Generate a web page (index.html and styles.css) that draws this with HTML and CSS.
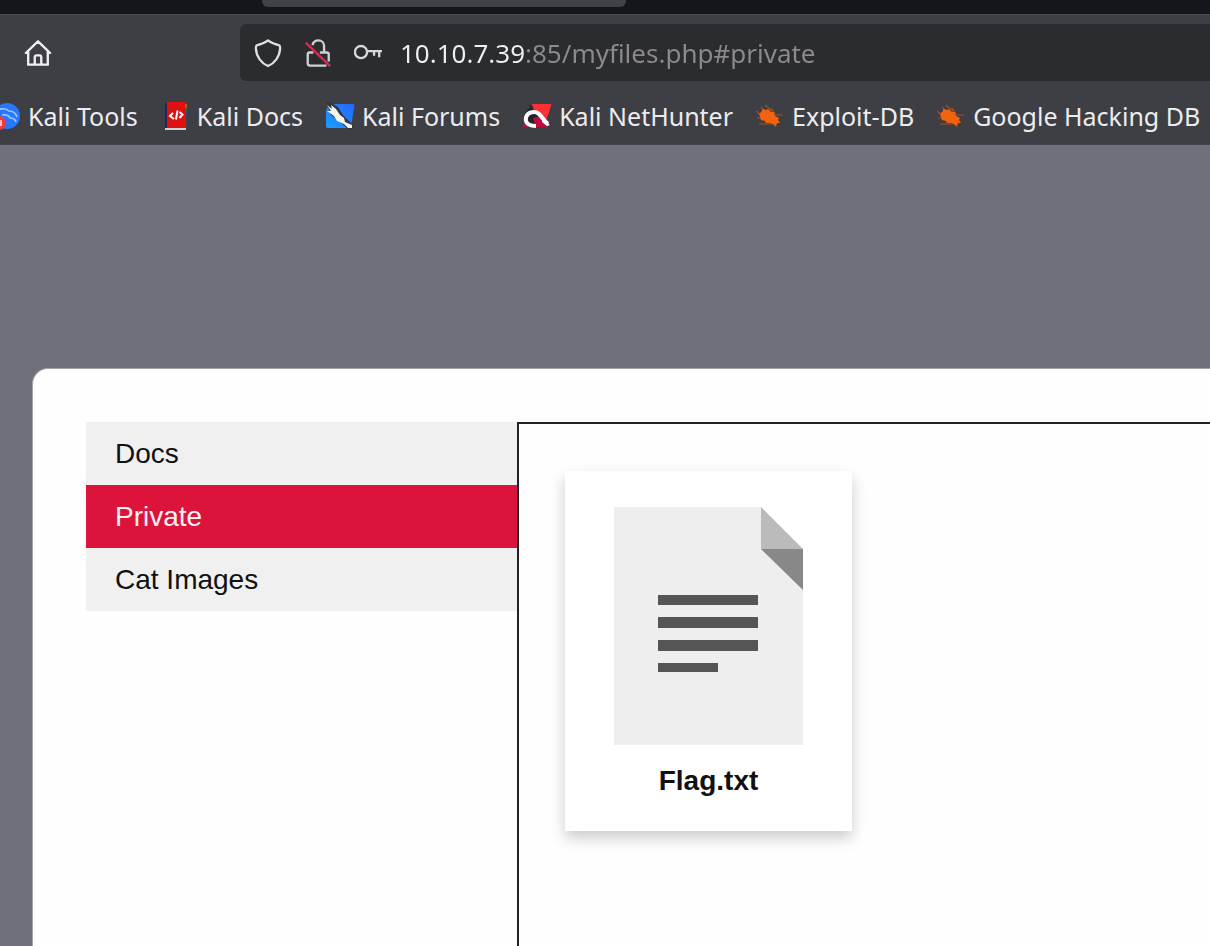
FILE: index.html
```html
<!DOCTYPE html>
<html lang="en">
<head>
<meta charset="utf-8">
<meta name="viewport" content="width=device-width, initial-scale=1">
<title>My Files</title>
<link rel="stylesheet" href="styles.css">
</head>
<body>
<header class="browser">
  <div class="tab-strip"><div class="active-tab"></div></div>
  <div class="toolbar">
    <button class="home" type="button" aria-label="Home">
      <svg class="icon" viewBox="0 0 30 30" fill="none" stroke="#f0f0f3" stroke-width="2.500" stroke-linejoin="round" stroke-linecap="round"><path d="M2 15 15 2.500 28 15M4.500 13v14.500h21V13M11.500 27v-7.500q0-2 2-2h3q2 0 2 2V27"/></svg>
    </button>
    <div class="address">
      <svg class="icon" viewBox="0 0 30 30" fill="none" stroke="#e0e0e2" stroke-width="2.400" stroke-linejoin="round"><path d="M15 1.500C12 4 7 5.700 3.500 6.500 2 6.800 2 8 2 10c.5 9 6 16 13 19C22 26 27.500 19 28 10c0-2 0-3.200-1.500-3.500C23 5.700 18 4 15 1.500z"/></svg>
      <svg class="icon" viewBox="0 0 30 30" fill="none" stroke-width="2.500"><path stroke="#d0d0d2" stroke-linejoin="round" d="M9 6.500C10 3 12.500 1.500 15.500 1.500c3.500 0 6 2.500 6 6v7M17 14.500h7.500q2 0 2 2V24M10 14.500H6q-2 0-2 2V26q0 2.500 2.500 2.500H24"/><path stroke="#e22850" d="m2 4 26 25"/></svg>
      <svg class="icon" viewBox="0 0 30 30" fill="none" stroke="#d8d8da" stroke-width="2.500"><circle cx="7.500" cy="14" r="6.500"/><path d="M14 13h16M27 13v6.500M21.500 13v5"/></svg>
      <input class="url" type="text" aria-label="Address" value="10.10.7.39:85/myfiles.php#private" spellcheck="false">
    </div>
  </div>
  <nav class="bookmarks" aria-label="Bookmarks">
    <a class="bookmark" href="#tools">
      <svg class="favicon" viewBox="0 0 28 28"><circle cx="15" cy="14" r="13" fill="#2777ff"/><path d="M5 8q8-3 12 1 6 0 8 6M10 13q6-1 8 3 5 0 6 4" fill="none" stroke="#a9caff" stroke-width="1.600"/><circle cx="7" cy="21" r="7" fill="#f13b3e"/><path d="M5 18h5v6H4z" fill="#ffc0bd"/></svg>
      <span>Kali Tools</span></a>
    <a class="bookmark" href="#docs-kali">
      <svg class="favicon" viewBox="0 0 28 28"><path fill="#1b2663" d="M4 1h4v25H4z"/><path fill="#df1010" d="M6 0h19v26H6z"/><path fill="#d3cfcf" d="M4 26h21v2H4z"/><path fill="#b7571e" d="M24 2h2v4h-2z"/><path fill="#276b3b" d="M24 6h2v4h-2z"/><path fill="#304b85" d="M24 10h2v4h-2z"/><path fill="none" stroke="#fff" stroke-width="2" d="m12 11-3 3 4 3M16.500 8.500l-1.500 9M18.500 10l3 2.500-3 3.500"/></svg>
      <span>Kali Docs</span></a>
    <a class="bookmark" href="#forums">
      <svg class="favicon" viewBox="0 0 28 28"><defs><linearGradient id="blue" x1="1" y1="0" x2="0" y2="1"><stop stop-color="#2465ff"/><stop offset="1" stop-color="#19a0ff"/></linearGradient></defs><path fill="url(#blue)" d="M3 2h24q2 0 1.500 2L25 24q0 2-2 2H2q-2 0-2-2V9z"/><path fill="#35363a" d="m0 0 4 0 8 5 5 8 10 10v4h-5l-10-9-7-5z"/><path fill="#f4f4f1" d="m1 3 5 4-1-4 5 4 4 6 4 3 1 4 7 3v3h-4l-4-4-7-3-3-5-7-5 4 0z"/></svg>
      <span>Kali Forums</span></a>
    <a class="bookmark" href="#nethunter">
      <svg class="favicon" viewBox="0 0 28 28"><path fill="#282329" d="m0 1 4 1 4 3-4 3-3 5v9l6 3 17-1 2-2-6-6L12 5z"/><path fill="#ff3035" d="M9 2h18q2 0 1 2l-5 15L11 9z"/><path fill="#c00b40" d="m0 19 5 6H2q-2 0-2-2zM10 16l7-2 4 8 3 3H13z"/><path fill="none" stroke="#fff" stroke-width="4" d="M13 24c-5 0-9-1-10-5-1-6 3-9 8-9 7 0 8 8 14 12"/><path fill="#fff" d="m20 17 7 6-3 1-5-4z"/></svg>
      <span>Kali NetHunter</span></a>
    <a class="bookmark" href="#exploit-db">
      <svg class="favicon" viewBox="0 0 28 28"><path fill="none" stroke="#a44e22" stroke-width="1.200" d="M0 9l5 4M1 16l6 0M5 5l5 5M9 3l7 6M15 6l4 6M19 13h8M3 22h13l2-3M16 20l4 5"/><path fill="#f3620d" d="m3 12 3-3 0-2 4 1 2-1 3 3 3 0 1 4 4 2-1 2 2 3-3 0-1 3-5-3-5 0-1-2-4-1-1-3z"/></svg>
      <span>Exploit-DB</span></a>
    <a class="bookmark" href="#ghdb">
      <svg class="favicon" viewBox="0 0 28 28"><path fill="none" stroke="#a44e22" stroke-width="1.200" d="M0 9l5 4M1 16l6 0M5 5l5 5M9 3l7 6M15 6l4 6M19 13h8M3 22h13l2-3M16 20l4 5"/><path fill="#f3620d" d="m3 12 3-3 0-2 4 1 2-1 3 3 3 0 1 4 4 2-1 2 2 3-3 0-1 3-5-3-5 0-1-2-4-1-1-3z"/></svg>
      <span>Google Hacking DB</span></a>
  </nav>
</header>
<main class="page">
  <div class="card">
    <nav class="folders" aria-label="Folders">
      <a class="folder" href="#docs">Docs</a>
      <a class="folder selected" href="#private" aria-current="page">Private</a>
      <a class="folder" href="#cats">Cat Images</a>
    </nav>
    <section class="files" aria-label="Private">
      <a class="file" href="#flag">
        <svg class="document" viewBox="0 0 189 238"><path fill="#eee" d="M0 0h147l42 42v196H0z"/><path fill="#bbb" d="M147 0l42 42h-42z"/><path fill="#888" d="M147 42h42v41z"/><path fill="#555" d="M44 88h100v10H44zM44 110h100v11H44zM44 133h100v11H44zM44 156h60v9H44z"/></svg>
        <span class="file-name">Flag.txt</span>
      </a>
    </section>
  </div>
</main>
</body>
</html>
```
FILE: styles.css
```css
* { box-sizing: border-box; }

body {
  margin: 0;
  min-height: 100vh;
  display: flex;
  flex-direction: column;
  overflow: hidden;
  background: #70707c;
  font-family: "Liberation Sans", Arial, sans-serif;
  font-size: 28px;
}

a { color: inherit; text-decoration: none; }

.browser {
  height: 145px;
  flex: none;
  background: #3e3f44;
  border-bottom: 1px solid #45454c;
  color: #ececee;
  font-family: "Noto Sans", sans-serif;
  font-size: 25px;
  overflow: hidden;
}

.tab-strip {
  height: 14px;
  padding-left: 262px;
  background: #15161b;
}

.active-tab {
  width: 364px;
  height: 7px;
  background: #414247;
  border-radius: 0 0 6px 6px;
}

.toolbar {
  display: flex;
  align-items: center;
  justify-content: space-between;
  padding: 9px 0 8px 24px;
  border-top: 1px solid #4a4a50;
}

.icon { width: 28px; height: 30px; flex: none; display: block; }

.home {
  padding: 0;
  border: 0;
  background: none;
}

.address {
  display: flex;
  align-items: center;
  gap: 22px;
  width: calc(100% - 216px);
  height: 57px;
  padding-left: 14px;
  background: #2b2c30;
  border-radius: 6px 0 0 6px;
}

.url {
  flex: 1;
  min-width: 0;
  height: 40px;
  margin-left: -4px;
  padding: 0;
  border: 0;
  outline: 0;
  color: #8b8b8e;
  font: inherit;
  font-size: 26px;
  background: linear-gradient(to right, #f0f0f2 125px, #8b8b8e 125px);
  -webkit-background-clip: text;
  background-clip: text;
  -webkit-text-fill-color: transparent;
}

.bookmarks {
  display: flex;
  gap: 23px;
  margin-left: -8px;
  padding-top: 9px;
  line-height: 36px;
  white-space: nowrap;
}

.bookmark {
  display: flex;
  align-items: center;
  gap: 8px;
  flex: none;
}

.favicon { width: 28px; height: 28px; overflow: visible; }

.page {
  flex: 1;
  display: flex;
  padding: 223px 0 0 32px;
}

.card {
  flex: 1;
  display: flex;
  align-items: stretch;
  padding: 53px 0 0 53px;
  background: #fefefe;
  border: 1px solid #a5a5a8;
  border-width: 1px 0 0 1px;
  border-radius: 16px 0 0 0;
}

.folders { width: 431px; }

.folder {
  display: block;
  padding: 0 29px;
  line-height: 63px;
  background: #f0f0f0;
  color: #111;
}

.folder.selected { background: #dc143c; color: #fff0f3; }

.files {
  flex: 1;
  padding: 47px 46px;
  border: 2px solid #222;
  border-width: 2px 0 0 2px;
}

.file {
  display: flex;
  flex-direction: column;
  align-items: center;
  gap: 20px;
  width: 287px;
  padding: 36px 0 34px;
  background: #fff;
  box-shadow: 0 7px 14px rgba(0, 0, 0, 0.2);
  color: #111;
}

.document { width: 189px; height: 238px; }

.file-name { font-weight: bold; line-height: 32px; }
```
